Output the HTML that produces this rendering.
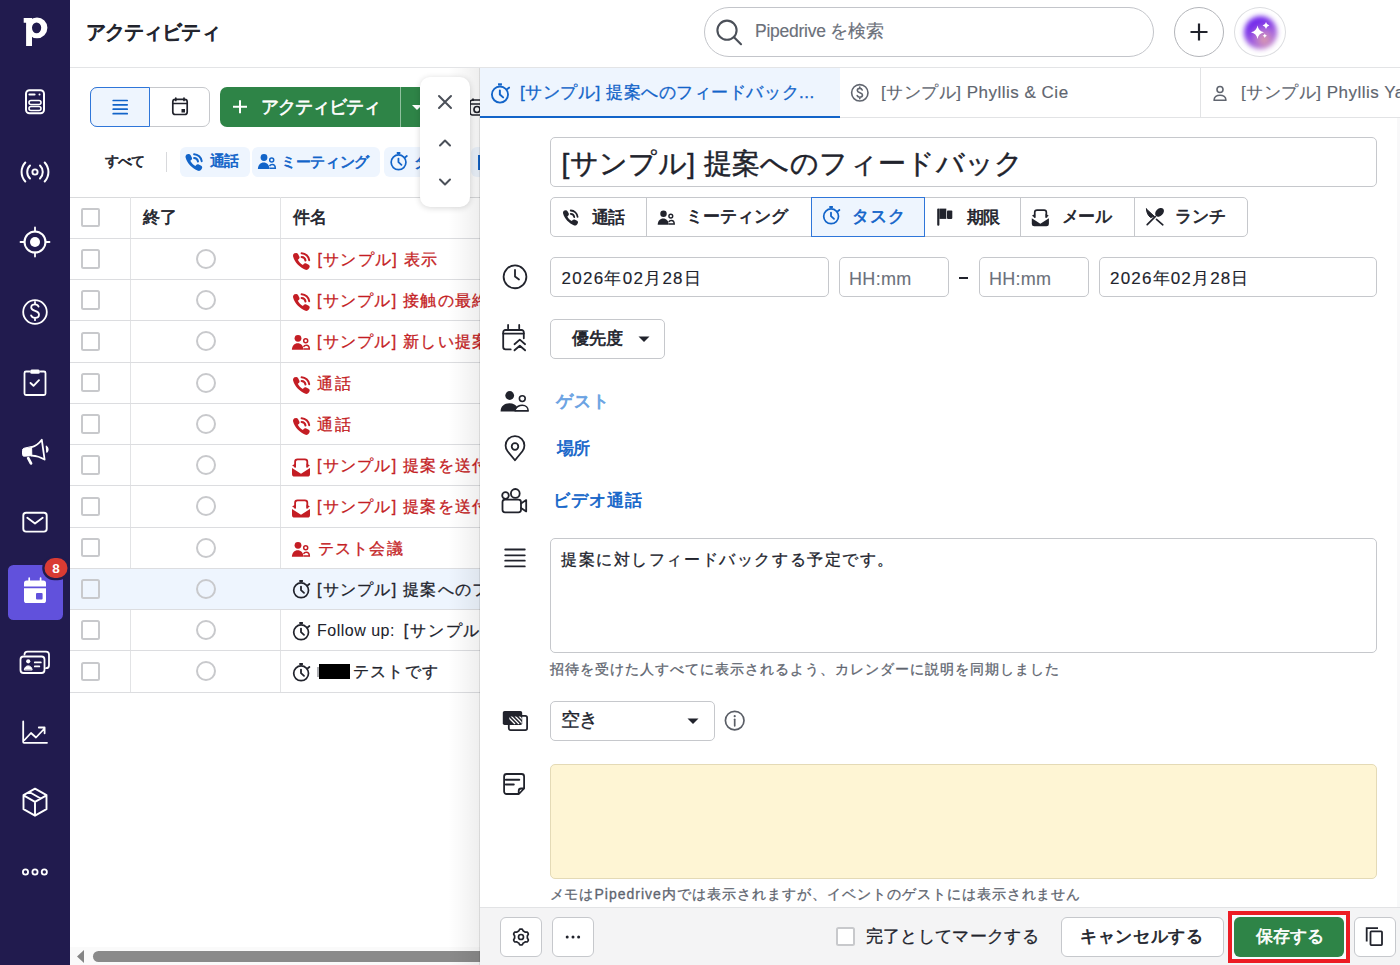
<!DOCTYPE html>
<html><head><meta charset="utf-8">
<style>
*{box-sizing:border-box;margin:0;padding:0}
html,body{width:1400px;height:965px;overflow:hidden;background:#fff;font-family:"Liberation Sans",sans-serif;color:#21232c}
.abs{position:absolute}
#side{position:absolute;left:0;top:0;width:70px;height:965px;background:#211b4e}
.si{position:absolute;left:23px;width:24px;height:24px}
#hdr{position:absolute;left:70px;top:0;width:1330px;height:68px;background:#fff;border-bottom:1px solid #e3e4e6}
#list{position:absolute;left:0;top:0;width:480px;height:965px;overflow:hidden}
#panel{position:absolute;left:0;top:0;width:1400px;height:965px}
.t{position:absolute;white-space:nowrap;line-height:1;-webkit-text-stroke:0.3px currentColor}
.t[style*="bold"]{font-weight:normal!important;-webkit-text-stroke:0.65px currentColor}
</style></head><body>

<div id="side">
<svg width="70" height="965" viewBox="0 0 70 965" style="position:absolute;left:0;top:0" fill="none" stroke="#fff" stroke-width="2" stroke-linecap="round" stroke-linejoin="round">
<!-- logo p -->
<path d="M23.7 17.9H32V45.9H26.1V22.8H23.7z" fill="#fff" stroke="none"/>
<path d="M37 17.5a10.4 10.35 0 1 1 0 20.7a10.4 10.35 0 1 1 0-20.7z M36.6 22.4a4.6 5.45 0 1 0 0 10.9a4.6 5.45 0 1 0 0-10.9z" fill="#fff" stroke="none" fill-rule="evenodd"/>
<!-- leads -->
<rect x="26" y="90.3" width="18" height="23" rx="3.5"/>
<rect x="29" y="100.5" width="12" height="4" rx="2" stroke-width="1.6"/>
<rect x="29" y="106.5" width="12" height="4" rx="2" stroke-width="1.6"/>
<path d="M29.5 94.5h5" stroke-width="2.2"/><circle cx="39.5" cy="94.5" r="1" fill="#fff" stroke="none"/>
<!-- broadcast -->
<circle cx="35" cy="172" r="2.6" stroke-width="1.9"/>
<path d="M30 165.5a9 9 0 0 0 0 13M40 165.5a9 9 0 0 1 0 13"/>
<path d="M25.3 162.5a14 14 0 0 0 0 19M44.7 162.5a14 14 0 0 1 0 19"/>
<!-- target -->
<circle cx="35" cy="242" r="10.5" stroke-width="2"/>
<circle cx="35" cy="242" r="5" fill="#fff" stroke="none"/>
<path d="M35 227.5v4M35 252.5v4M20.5 242h4M45.5 242h4" stroke-width="1.8"/>
<!-- dollar -->
<circle cx="35" cy="312" r="11.8" stroke-width="1.8"/>
<path d="M38.6 306.6c-.6-1.5-2-2.3-3.6-2.3-2.2 0-3.8 1.3-3.8 3.2 0 4.2 7.8 2.6 7.8 6.9 0 2-1.7 3.4-4 3.4-1.8 0-3.3-.9-3.9-2.4M35 302v2.3M35 317.8v2.4" stroke-width="1.8"/>
<!-- clipboard -->
<path d="M29.5 371.5h-3.5a1.5 1.5 0 0 0-1.5 1.5v20.5a1.5 1.5 0 0 0 1.5 1.5h18a1.5 1.5 0 0 0 1.5-1.5V373a1.5 1.5 0 0 0-1.5-1.5h-3.5" stroke-width="1.8"/>
<rect x="30.2" y="369.5" width="9.6" height="4.2" rx="1.5" fill="#fff" stroke="none"/>
<path d="M30.5 383l3 2.8 5.5-5.6" stroke-width="1.9"/>
<!-- megaphone -->
<path d="M23.8 448.3C23 448.5 22.5 449.3 22.5 450.3V454.5C22.5 455.5 23.2 456.3 24.2 456.2L31.8 455.7L31.6 446.9z" fill="#fff" stroke="#fff" stroke-width="1"/>
<path d="M31.6 447.2C35.5 446.2 39 443.6 41.8 439.8L44.6 459.6C40.8 457.3 36.5 455.9 31.8 455.7" stroke-width="1.8"/>
<path d="M28.2 458.2L31 463.4" stroke-width="2.8"/>
<path d="M46.3 446.2C48.3 447.5 48.7 450.5 46.8 452.2z" fill="#fff" stroke="#fff" stroke-width="1.2"/>
<!-- mail -->
<rect x="23.3" y="512.8" width="23.4" height="18.8" rx="2.8" stroke-width="1.9"/>
<path d="M27.3 517.8l7.7 5.8 7.7-5.8" stroke-width="1.9"/>
<!-- active -->
<rect x="8" y="565" width="55" height="55" rx="5.5" fill="#6151dc" stroke="none"/>
<path d="M24 583.2a2.6 2.6 0 0 1 2.6-2.6h16.8a2.6 2.6 0 0 1 2.6 2.6v3.2H24z M24 588.2h22v12.3a2.6 2.6 0 0 1-2.6 2.6H26.6a2.6 2.6 0 0 1-2.6-2.6z" fill="#fff" stroke="none"/>
<path d="M29.2 578.2v3M40.6 578.2v3" stroke-width="1.7"/>
<rect x="36" y="593" width="6.6" height="6.5" rx="1" fill="#6151dc" stroke="none"/>
<rect x="42.2" y="555.8" width="27.6" height="24.4" rx="12.2" fill="#211b4e" stroke="none"/>
<rect x="44.5" y="558" width="23" height="20" rx="10" fill="#d93b33" stroke="none"/>
<text x="56" y="573" text-anchor="middle" font-family="Liberation Sans" font-weight="bold" font-size="13.5" fill="#fff" stroke="none">8</text>
<!-- contacts -->
<path d="M24.5 654.6a3 3 0 0 1 3-3h18.5a3 3 0 0 1 3 3v10.6a3 3 0 0 1-3 3" stroke-width="1.8"/>
<rect x="20.5" y="656.5" width="24" height="16.5" rx="3" stroke-width="1.8"/>
<circle cx="28.2" cy="661.3" r="2.1" fill="#fff" stroke="none"/>
<path d="M24.3 669.6c.4-2.5 2-3.7 3.9-3.7s3.5 1.2 3.9 3.7z" fill="#fff" stroke="#fff" stroke-width="1"/>
<path d="M34.8 662.4h6M34.8 666.4h4.5" stroke-width="1.8"/>
<!-- chart -->
<path d="M23.2 721.5v20.5a.8.8 0 0 0 .8.8h23" stroke-width="1.8"/>
<path d="M24.5 740l6.5-7 5 4.5 8.5-9M38.8 727.5h5.8v5.8" stroke-width="1.8"/>
<!-- box -->
<path d="M35 788.7l11.5 6.5v14l-11.5 6.5-11.5-6.5v-14z M23.6 795.3L35 801.8l11.4-6.5 M35 801.8v13.8 M29.3 792l11.4 6.5" stroke-width="1.9"/>
<!-- dots -->
<circle cx="25.5" cy="872" r="2.6" stroke-width="1.8"/>
<circle cx="35" cy="872" r="2.6" stroke-width="1.8"/>
<circle cx="44.3" cy="872" r="2.6" stroke-width="1.8"/>
</svg>
</div>

<div id="hdr">
  <div class="t" id="hdrt" style="-webkit-text-stroke:1px currentColor;left:16.00px;top:21.50px;font-size:20px;font-weight:bold;letter-spacing:-0.91px">アクティビティ</div>
  <div class="abs" style="left:634px;top:7px;width:450px;height:50px;border:1px solid #c3c5ca;border-radius:25px"></div>
  <svg class="abs" style="left:640px;top:10px" width="40" height="40" viewBox="0 0 40 40" fill="none" stroke="#4b5059" stroke-width="2.1" stroke-linecap="round"><circle cx="17" cy="20.2" r="9.6"/><path d="M24 27.2l7 7"/></svg>
  <div class="t" id="srch" style="-webkit-text-stroke:0.15px currentColor;left:685.00px;top:23.30px;font-size:17.5px;color:#6b707a;letter-spacing:-0.25px">Pipedrive を検索</div>
  <div class="abs" style="left:1104px;top:7px;width:50px;height:50px;border:1px solid #b3b5ba;border-radius:50%"></div>
  <svg class="abs" style="left:1104px;top:7px" width="50" height="50" viewBox="0 0 50 50" fill="none" stroke="#21232c" stroke-width="2.2"><path d="M25 16.5v17M16.5 25h17"/></svg>
  <div class="abs" style="left:1164px;top:7px;width:52px;height:50px;border:1px solid #dcdde0;border-radius:50%;overflow:hidden">
    <div class="abs" style="left:9px;top:8px;width:33px;height:33px;border-radius:50%;filter:blur(2.5px);background:radial-gradient(circle at 62% 72%,#e0a0a8 0%,#b070d8 30%,rgba(160,80,235,0) 60%),radial-gradient(circle at 42% 38%,#6a20ee 0%,#7a30ea 45%,#9048e0 70%,#b78ad8 100%)"></div>
    <svg class="abs" style="left:0;top:0" width="52" height="50" viewBox="0 0 52 50" fill="#fff"><path d="M22.5 17.5q1 5.5 6.5 6.8q-5.5 1.2-6.5 6.8q-1-5.6-6.5-6.8q5.5-1.3 6.5-6.8z"/><path d="M31 14q.6 3 3.4 3.5q-2.8.6-3.4 3.5q-.6-2.9-3.4-3.5q2.8-.5 3.4-3.5z"/><path d="M29.8 25.5q.4 1.9 2.2 2.3q-1.8.4-2.2 2.3q-.4-1.9-2.2-2.3q1.8-.4 2.2-2.3z"/></svg>
  </div>
</div>

<div id="list">
<div class="abs" style="left:90px;top:87px;width:120px;height:40px;border:1px solid #c6c8cc;border-radius:7px"></div>
<div class="abs" style="left:90px;top:87px;width:60px;height:40px;border:1.5px solid #2f76d9;border-radius:7px 0 0 7px;background:#eef5fe"></div>
<svg class="abs" style="left:90px;top:87px" width="120" height="40" viewBox="0 0 120 40" fill="none" stroke-linecap="round">
<path d="M23.2 13.5h14M23.2 17.8h14M23.2 22.2h14M23.2 26.7h14" stroke="#1264c9" stroke-width="1.7"/>
<rect x="82.8" y="12.3" width="14.4" height="15.2" rx="2.5" stroke="#21232c" stroke-width="1.7"/>
<path d="M82.8 16.5h14.4M85.8 11v2.5M94 11v2.5" stroke="#21232c" stroke-width="1.7"/>
<rect x="91.5" y="22" width="3.5" height="3.5" fill="#21232c"/>
</svg>
<div class="abs" style="left:220px;top:87px;width:240px;height:40px;background:#2e8447;border-radius:7px"></div>
<div class="abs" style="left:400px;top:87px;width:1px;height:40px;background:#8fc09d"></div>
<svg class="abs" style="left:220px;top:87px" width="40" height="40" viewBox="0 0 40 40"><path d="M20 13.2v13M13 19.8h14" stroke="#fff" stroke-width="2"/></svg>
<div class="t" id="gbtn" style="left:261.00px;top:98px;font-size:18px;font-weight:bold;color:#fff;letter-spacing:-1.07px">アクティビティ</div>
<svg class="abs" style="left:410px;top:100px" width="14" height="14" viewBox="0 0 14 14"><path d="M2 5h10l-5 5z" fill="#fff"/></svg>
<svg class="abs" style="left:462px;top:92px" width="30" height="30" viewBox="0 0 30 30" fill="none" stroke="#21232c" stroke-width="1.7"><rect x="8" y="8" width="14" height="15" rx="2.5"/><path d="M8 12h14M11 6.5v2.5M19 6.5v2.5"/><circle cx="15" cy="17.5" r="3"/></svg>

<div class="t" id="all" style="left:105.00px;top:153.50px;font-size:14px;font-weight:bold;color:#21232c;letter-spacing:-0.87px">すべて</div>
<div class="abs" style="left:166px;top:152px;width:1px;height:20px;background:#d8d9dc"></div>
<div class="abs" style="left:180px;top:147px;width:70px;height:30px;background:#eef5fe;border-radius:6px"></div>
<svg class="abs" style="left:180px;top:147px" width="30" height="30" viewBox="0 0 30 30"><g transform="translate(0.5,0)"><path d="M7.2 7.3c1-.6 2.2-.3 2.8.7l1.3 2.4c.5.9.3 2-.5 2.6l-1 .8c1.1 2.2 2.9 4 5.1 5.1l.8-1c.6-.8 1.7-1 2.6-.5l2.4 1.3c1 .6 1.3 1.8.7 2.8l-.6 1c-.7 1.1-2 1.7-3.3 1.3C11.6 21.3 6.7 16.4 5.1 10.5c-.3-1.3.2-2.6 1.3-3.3z" fill="#1264c9"/><path d="M13.6 7.2a8 8 0 0 1 7.6 7M13.6 11a4.2 4.2 0 0 1 3.9 3.5" fill="none" stroke="#1264c9" stroke-width="2" stroke-linecap="round"/></g></svg>
<div class="t" id="c1" style="left:210.00px;top:153.00px;font-size:15px;font-weight:bold;color:#1264c9;letter-spacing:-1.00px">通話</div>
<div class="abs" style="left:252px;top:147px;width:128px;height:30px;background:#eef5fe;border-radius:6px"></div>
<svg class="abs" style="left:252px;top:147px" width="30" height="30" viewBox="0 0 30 30"><g transform="translate(2,0.2)"><circle cx="10" cy="10.3" r="3.4" fill="#1264c9"/><path d="M3.9 21.8c0-4 2.6-6.6 5.8-6.6s5.8 2.6 5.8 6.6z" fill="#1264c9"/><circle cx="17.7" cy="12.7" r="2" fill="none" stroke="#1264c9" stroke-width="1.5"/><path d="M15.5 21.1h5.8c0-2.4-1.3-3.8-3-3.8-1.2 0-2.2.5-2.8 1.5" fill="none" stroke="#1264c9" stroke-width="1.5"/></g></svg>
<div class="t" id="c2" style="left:281.00px;top:153.50px;font-size:15px;font-weight:bold;color:#1264c9;letter-spacing:-0.31px">ミーティング</div>
<div class="abs" style="left:384px;top:147px;width:84px;height:30px;background:#eef5fe;border-radius:6px"></div>
<svg class="abs" style="left:384px;top:147px" width="30" height="30" viewBox="0 0 30 30"><g transform="translate(1.45,-1)"><circle cx="13.1" cy="16.3" r="7.4" fill="none" stroke="#1264c9" stroke-width="1.7"/><rect x="11.3" y="6" width="3.6" height="2" fill="#1264c9"/><path d="M19.8 11.2l1.6-1.2" stroke="#1264c9" stroke-width="1.8" stroke-linecap="round"/><path d="M13 12.6v3.6l3 2.7" fill="none" stroke="#1264c9" stroke-width="1.8" stroke-linecap="round" stroke-linejoin="round"/></g></svg>
<div class="t" id="c3" style="left:414px;top:153.50px;font-size:15px;font-weight:bold;color:#1264c9">タスク</div>
<div class="abs" style="left:471px;top:147px;width:20px;height:30px;background:#eef5fe;border-radius:6px"></div>
<div class="abs" style="left:478px;top:155px;width:2px;height:15px;background:#1264c9"></div>

<div class="abs" style="left:70px;top:197px;width:410px;height:1px;background:#d9dadc"></div>
<div class="abs" style="left:130px;top:197px;width:1px;height:495px;background:#e2e3e5"></div>
<div class="abs" style="left:280px;top:197px;width:1px;height:495px;background:#e2e3e5"></div>
<div class="abs" style="left:80.5px;top:208px;width:19px;height:19px;border:2px solid #c8c9cc;border-radius:2px;background:#fff"></div>
<div class="t" id="th1" style="left:143.00px;top:209px;font-size:17px;font-weight:bold;letter-spacing:0.00px">終了</div>
<div class="t" id="th2" style="left:293.00px;top:209px;font-size:17px;font-weight:bold;letter-spacing:-0.50px">件名</div>
<div class="abs" style="left:70px;top:568.25px;width:410px;height:41.25px;background:#eef5fe"></div>
<div class="abs" style="left:70px;top:238.0px;width:410px;height:1px;background:#dcdde0"></div>
<div class="abs" style="left:70px;top:279.0px;width:410px;height:1px;background:#dcdde0"></div>
<div class="abs" style="left:70px;top:320.25px;width:410px;height:1px;background:#dcdde0"></div>
<div class="abs" style="left:70px;top:361.5px;width:410px;height:1px;background:#dcdde0"></div>
<div class="abs" style="left:70px;top:402.75px;width:410px;height:1px;background:#dcdde0"></div>
<div class="abs" style="left:70px;top:444.0px;width:410px;height:1px;background:#dcdde0"></div>
<div class="abs" style="left:70px;top:485.25px;width:410px;height:1px;background:#dcdde0"></div>
<div class="abs" style="left:70px;top:526.5px;width:410px;height:1px;background:#dcdde0"></div>
<div class="abs" style="left:70px;top:567.75px;width:410px;height:1px;background:#dcdde0"></div>
<div class="abs" style="left:70px;top:609.0px;width:410px;height:1px;background:#dcdde0"></div>
<div class="abs" style="left:70px;top:650.25px;width:410px;height:1px;background:#dcdde0"></div>
<div class="abs" style="left:70px;top:691.5px;width:410px;height:1px;background:#dcdde0"></div>
<div class="abs" style="left:80.5px;top:249.25px;width:19.5px;height:19.5px;border:2px solid #c8c9cc;border-radius:2.5px"></div>
<div class="abs" style="left:196px;top:249.0px;width:20px;height:20px;border:2px solid #c8c9cc;border-radius:50%"></div>
<svg class="abs" style="left:288px;top:246.0px" width="30" height="30" viewBox="0 0 30 30"><path d="M7.2 7.3c1-.6 2.2-.3 2.8.7l1.3 2.4c.5.9.3 2-.5 2.6l-1 .8c1.1 2.2 2.9 4 5.1 5.1l.8-1c.6-.8 1.7-1 2.6-.5l2.4 1.3c1 .6 1.3 1.8.7 2.8l-.6 1c-.7 1.1-2 1.7-3.3 1.3C11.6 21.3 6.7 16.4 5.1 10.5c-.3-1.3.2-2.6 1.3-3.3z" fill="#c41d24"/><path d="M13.6 7.2a8 8 0 0 1 7.6 7M13.6 11a4.2 4.2 0 0 1 3.9 3.5" fill="none" stroke="#c41d24" stroke-width="2" stroke-linecap="round"/></svg>
<div class="t" id="r0" style="left:317.50px;top:252.00px;font-size:16px;color:#c41d24;letter-spacing:1.26px">[サンプル] 表示</div>
<div class="abs" style="left:80.5px;top:290.375px;width:19.5px;height:19.5px;border:2px solid #c8c9cc;border-radius:2.5px"></div>
<div class="abs" style="left:196px;top:290.125px;width:20px;height:20px;border:2px solid #c8c9cc;border-radius:50%"></div>
<svg class="abs" style="left:288px;top:287.125px" width="30" height="30" viewBox="0 0 30 30"><path d="M7.2 7.3c1-.6 2.2-.3 2.8.7l1.3 2.4c.5.9.3 2-.5 2.6l-1 .8c1.1 2.2 2.9 4 5.1 5.1l.8-1c.6-.8 1.7-1 2.6-.5l2.4 1.3c1 .6 1.3 1.8.7 2.8l-.6 1c-.7 1.1-2 1.7-3.3 1.3C11.6 21.3 6.7 16.4 5.1 10.5c-.3-1.3.2-2.6 1.3-3.3z" fill="#c41d24"/><path d="M13.6 7.2a8 8 0 0 1 7.6 7M13.6 11a4.2 4.2 0 0 1 3.9 3.5" fill="none" stroke="#c41d24" stroke-width="2" stroke-linecap="round"/></svg>
<div class="t" id="r1" style="left:317.00px;top:293.12px;font-size:16px;color:#c41d24;letter-spacing:1.26px">[サンプル] 接触の最終確認</div>
<div class="abs" style="left:80.5px;top:331.625px;width:19.5px;height:19.5px;border:2px solid #c8c9cc;border-radius:2.5px"></div>
<div class="abs" style="left:196px;top:331.375px;width:20px;height:20px;border:2px solid #c8c9cc;border-radius:50%"></div>
<svg class="abs" style="left:288px;top:328.375px" width="30" height="30" viewBox="0 0 30 30"><circle cx="10" cy="10.3" r="3.4" fill="#c41d24"/><path d="M3.9 21.8c0-4 2.6-6.6 5.8-6.6s5.8 2.6 5.8 6.6z" fill="#c41d24"/><circle cx="17.7" cy="12.7" r="2" fill="none" stroke="#c41d24" stroke-width="1.5"/><path d="M15.5 21.1h5.8c0-2.4-1.3-3.8-3-3.8-1.2 0-2.2.5-2.8 1.5" fill="none" stroke="#c41d24" stroke-width="1.5"/></svg>
<div class="t" id="r2" style="left:317.00px;top:334.38px;font-size:16px;color:#c41d24;letter-spacing:1.26px">[サンプル] 新しい提案</div>
<div class="abs" style="left:80.5px;top:372.875px;width:19.5px;height:19.5px;border:2px solid #c8c9cc;border-radius:2.5px"></div>
<div class="abs" style="left:196px;top:372.625px;width:20px;height:20px;border:2px solid #c8c9cc;border-radius:50%"></div>
<svg class="abs" style="left:288px;top:369.625px" width="30" height="30" viewBox="0 0 30 30"><path d="M7.2 7.3c1-.6 2.2-.3 2.8.7l1.3 2.4c.5.9.3 2-.5 2.6l-1 .8c1.1 2.2 2.9 4 5.1 5.1l.8-1c.6-.8 1.7-1 2.6-.5l2.4 1.3c1 .6 1.3 1.8.7 2.8l-.6 1c-.7 1.1-2 1.7-3.3 1.3C11.6 21.3 6.7 16.4 5.1 10.5c-.3-1.3.2-2.6 1.3-3.3z" fill="#c41d24"/><path d="M13.6 7.2a8 8 0 0 1 7.6 7M13.6 11a4.2 4.2 0 0 1 3.9 3.5" fill="none" stroke="#c41d24" stroke-width="2" stroke-linecap="round"/></svg>
<div class="t" id="r3" style="left:317.00px;top:375.62px;font-size:16px;color:#c41d24;letter-spacing:2.00px">通話</div>
<div class="abs" style="left:80.5px;top:414.125px;width:19.5px;height:19.5px;border:2px solid #c8c9cc;border-radius:2.5px"></div>
<div class="abs" style="left:196px;top:413.875px;width:20px;height:20px;border:2px solid #c8c9cc;border-radius:50%"></div>
<svg class="abs" style="left:288px;top:410.875px" width="30" height="30" viewBox="0 0 30 30"><path d="M7.2 7.3c1-.6 2.2-.3 2.8.7l1.3 2.4c.5.9.3 2-.5 2.6l-1 .8c1.1 2.2 2.9 4 5.1 5.1l.8-1c.6-.8 1.7-1 2.6-.5l2.4 1.3c1 .6 1.3 1.8.7 2.8l-.6 1c-.7 1.1-2 1.7-3.3 1.3C11.6 21.3 6.7 16.4 5.1 10.5c-.3-1.3.2-2.6 1.3-3.3z" fill="#c41d24"/><path d="M13.6 7.2a8 8 0 0 1 7.6 7M13.6 11a4.2 4.2 0 0 1 3.9 3.5" fill="none" stroke="#c41d24" stroke-width="2" stroke-linecap="round"/></svg>
<div class="t" id="r4" style="left:317.00px;top:416.88px;font-size:16px;color:#c41d24;letter-spacing:2.00px">通話</div>
<div class="abs" style="left:80.5px;top:455.375px;width:19.5px;height:19.5px;border:2px solid #c8c9cc;border-radius:2.5px"></div>
<div class="abs" style="left:196px;top:455.125px;width:20px;height:20px;border:2px solid #c8c9cc;border-radius:50%"></div>
<svg class="abs" style="left:288px;top:452.125px" width="30" height="30" viewBox="0 0 30 30"><path d="M4 16l9 5.8 9-5.8v6a2.6 2.6 0 0 1-2.6 2.6H6.6A2.6 2.6 0 0 1 4 22z" fill="#c41d24"/><path d="M7.1 15.5V9.8a2.4 2.4 0 0 1 2.4-2.4h7.4a2.4 2.4 0 0 1 2.4 2.4v5.7" fill="none" stroke="#c41d24" stroke-width="1.8"/><path d="M4.1 13.5L7.5 11.4v4.2zM21.9 13.5L18.5 11.4v4.2z" fill="#c41d24"/></svg>
<div class="t" id="r5" style="left:317.00px;top:458.12px;font-size:16px;color:#c41d24;letter-spacing:1.26px">[サンプル] 提案を送付</div>
<div class="abs" style="left:80.5px;top:496.625px;width:19.5px;height:19.5px;border:2px solid #c8c9cc;border-radius:2.5px"></div>
<div class="abs" style="left:196px;top:496.375px;width:20px;height:20px;border:2px solid #c8c9cc;border-radius:50%"></div>
<svg class="abs" style="left:288px;top:493.375px" width="30" height="30" viewBox="0 0 30 30"><path d="M4 16l9 5.8 9-5.8v6a2.6 2.6 0 0 1-2.6 2.6H6.6A2.6 2.6 0 0 1 4 22z" fill="#c41d24"/><path d="M7.1 15.5V9.8a2.4 2.4 0 0 1 2.4-2.4h7.4a2.4 2.4 0 0 1 2.4 2.4v5.7" fill="none" stroke="#c41d24" stroke-width="1.8"/><path d="M4.1 13.5L7.5 11.4v4.2zM21.9 13.5L18.5 11.4v4.2z" fill="#c41d24"/></svg>
<div class="t" id="r6" style="left:317.00px;top:499.38px;font-size:16px;color:#c41d24;letter-spacing:1.26px">[サンプル] 提案を送付</div>
<div class="abs" style="left:80.5px;top:537.875px;width:19.5px;height:19.5px;border:2px solid #c8c9cc;border-radius:2.5px"></div>
<div class="abs" style="left:196px;top:537.625px;width:20px;height:20px;border:2px solid #c8c9cc;border-radius:50%"></div>
<svg class="abs" style="left:288px;top:534.625px" width="30" height="30" viewBox="0 0 30 30"><circle cx="10" cy="10.3" r="3.4" fill="#c41d24"/><path d="M3.9 21.8c0-4 2.6-6.6 5.8-6.6s5.8 2.6 5.8 6.6z" fill="#c41d24"/><circle cx="17.7" cy="12.7" r="2" fill="none" stroke="#c41d24" stroke-width="1.5"/><path d="M15.5 21.1h5.8c0-2.4-1.3-3.8-3-3.8-1.2 0-2.2.5-2.8 1.5" fill="none" stroke="#c41d24" stroke-width="1.5"/></svg>
<div class="t" id="r7" style="left:317.50px;top:540.62px;font-size:16px;color:#c41d24;letter-spacing:1.30px">テスト会議</div>
<div class="abs" style="left:80.5px;top:579.125px;width:19.5px;height:19.5px;border:2px solid #c8c9cc;border-radius:2.5px"></div>
<div class="abs" style="left:196px;top:578.875px;width:20px;height:20px;border:2px solid #c8c9cc;border-radius:50%"></div>
<svg class="abs" style="left:288px;top:574.4px" width="30" height="30" viewBox="0 0 30 30"><circle cx="13.1" cy="16.3" r="7.4" fill="none" stroke="#21232c" stroke-width="1.7"/><rect x="11.3" y="6" width="3.6" height="2" fill="#21232c"/><path d="M19.8 11.2l1.6-1.2" stroke="#21232c" stroke-width="1.8" stroke-linecap="round"/><path d="M13 12.6v3.6l3 2.7" fill="none" stroke="#21232c" stroke-width="1.8" stroke-linecap="round" stroke-linejoin="round"/></svg>
<div class="t" id="r8" style="left:317.00px;top:581.88px;font-size:16px;color:#21232c;letter-spacing:1.26px">[サンプル] 提案へのフィードバック</div>
<div class="abs" style="left:80.5px;top:620.375px;width:19.5px;height:19.5px;border:2px solid #c8c9cc;border-radius:2.5px"></div>
<div class="abs" style="left:196px;top:620.125px;width:20px;height:20px;border:2px solid #c8c9cc;border-radius:50%"></div>
<svg class="abs" style="left:288px;top:615.6px" width="30" height="30" viewBox="0 0 30 30"><circle cx="13.1" cy="16.3" r="7.4" fill="none" stroke="#21232c" stroke-width="1.7"/><rect x="11.3" y="6" width="3.6" height="2" fill="#21232c"/><path d="M19.8 11.2l1.6-1.2" stroke="#21232c" stroke-width="1.8" stroke-linecap="round"/><path d="M13 12.6v3.6l3 2.7" fill="none" stroke="#21232c" stroke-width="1.8" stroke-linecap="round" stroke-linejoin="round"/></svg>
<div class="t" id="r9" style="left:317.00px;top:623.12px;font-size:16px;color:#21232c;letter-spacing:1.8px"><span style="-webkit-text-stroke:0.05px currentColor;letter-spacing:0.5px">Follow up:<span style="letter-spacing:0">&nbsp; </span></span>[サンプル] 提案</div>
<div class="abs" style="left:80.5px;top:661.625px;width:19.5px;height:19.5px;border:2px solid #c8c9cc;border-radius:2.5px"></div>
<div class="abs" style="left:196px;top:661.375px;width:20px;height:20px;border:2px solid #c8c9cc;border-radius:50%"></div>
<svg class="abs" style="left:288px;top:656.9px" width="30" height="30" viewBox="0 0 30 30"><circle cx="13.1" cy="16.3" r="7.4" fill="none" stroke="#21232c" stroke-width="1.7"/><rect x="11.3" y="6" width="3.6" height="2" fill="#21232c"/><path d="M19.8 11.2l1.6-1.2" stroke="#21232c" stroke-width="1.8" stroke-linecap="round"/><path d="M13 12.6v3.6l3 2.7" fill="none" stroke="#21232c" stroke-width="1.8" stroke-linecap="round" stroke-linejoin="round"/></svg>
<div class="t" id="r10" style="left:353.00px;top:664.38px;font-size:16px;color:#21232c;letter-spacing:1.24px">テストです</div>
<div class="abs" style="left:316.5px;top:667px;width:2px;height:10px;background:#6b6e75;opacity:.55"></div>
<div class="abs" style="left:319px;top:664px;width:31px;height:15px;background:#000"></div>
<div class="abs" style="left:70px;top:946.5px;width:410px;height:19px;background:#fafafa"></div>
<svg class="abs" style="left:70px;top:946px" width="20" height="20" viewBox="0 0 20 20"><path d="M7 10.5l7-6.5v13z" fill="#858585"/></svg>
<div class="abs" style="left:93px;top:951px;width:400px;height:11px;background:#8a8a8a;border-radius:5.5px"></div>
<div class="abs" style="left:448px;top:68px;width:32px;height:897px;background:linear-gradient(90deg,rgba(0,0,0,0),rgba(0,0,0,.025) 40%,rgba(0,0,0,.065))"></div>
<div class="abs" style="left:479px;top:68px;width:1px;height:897px;background:rgba(0,0,0,.09)"></div>
<div class="abs" style="left:420px;top:77px;width:50px;height:130px;background:#fff;border-radius:10px;box-shadow:0 1px 6px rgba(0,0,0,.16)"></div>
<svg class="abs" style="left:420px;top:77px" width="50" height="130" viewBox="0 0 50 130" fill="none" stroke="#4b5059" stroke-width="2" stroke-linecap="round" stroke-linejoin="round">
<path d="M19 19l12 12M31 19l-12 12"/>
<path d="M20 68.5l5-5 5 5"/>
<path d="M20 102.5l5 5 5-5"/>
</svg>

</div>

<div id="panel">
<!-- tabs -->
<div class="abs" style="left:480px;top:68px;width:360px;height:50px;background:#eef5fe"></div>
<div class="abs" style="left:480px;top:117px;width:920px;height:1px;background:#e2e3e5"></div>
<div class="abs" style="left:480px;top:116px;width:360px;height:2px;background:#1264c9"></div>
<div class="abs" style="left:1200px;top:68px;width:1px;height:49px;background:#e2e3e5"></div>
<svg class="abs" style="left:485px;top:77px" width="30" height="30" viewBox="0 0 30 30"><g transform="translate(0.7,-0.24) scale(1.09)"><circle cx="13.1" cy="16.3" r="7.4" fill="none" stroke="#1264c9" stroke-width="1.7"/><rect x="11.3" y="6" width="3.6" height="2" fill="#1264c9"/><path d="M19.8 11.2l1.6-1.2" stroke="#1264c9" stroke-width="1.8" stroke-linecap="round"/><path d="M13 12.6v3.6l3 2.7" fill="none" stroke="#1264c9" stroke-width="1.8" stroke-linecap="round" stroke-linejoin="round"/></g></svg>
<div class="t" id="tab1" style="left:520.00px;top:84px;font-size:17px;color:#1264c9;letter-spacing:0.55px">[サンプル] 提案へのフィードバック...</div>
<svg class="abs" style="left:850px;top:83px" width="20" height="20" viewBox="0 0 20 20" fill="none" stroke="#60656f" stroke-width="1.6" stroke-linecap="round"><circle cx="9.8" cy="9.8" r="8.2"/><path d="M12.2 7c-.4-1-1.3-1.6-2.4-1.6-1.5 0-2.5.9-2.5 2.1 0 2.8 5.2 1.7 5.2 4.5 0 1.3-1.1 2.2-2.7 2.2-1.2 0-2.2-.6-2.6-1.6M9.8 4v1.4M9.8 14.2v1.5"/></svg>
<div class="t" id="tab2" style="-webkit-text-stroke:0.15px currentColor;left:881.00px;top:84px;font-size:17px;color:#60656f;letter-spacing:0.50px">[サンプル] Phyllis &amp; Cie</div>
<svg class="abs" style="left:1210px;top:83px" width="20" height="20" viewBox="0 0 20 20" fill="none" stroke="#60656f" stroke-width="1.6"><circle cx="10" cy="6.5" r="3"/><path d="M4.2 17.3v-.8c0-2.6 2.5-4.3 5.8-4.3s5.8 1.7 5.8 4.3v.8z"/></svg>
<div class="t" id="tab3" style="-webkit-text-stroke:0.15px currentColor;left:1241.00px;top:84px;font-size:17px;color:#60656f;letter-spacing:0.50px">[サンプル] Phyllis Yamamoto</div>

<div class="abs" style="left:1397px;top:118px;width:3px;height:789px;background:#f8f8f9"></div>
<!-- title -->
<div class="abs" style="left:550px;top:137px;width:827px;height:50px;border:1px solid #c6c8cc;border-radius:5px"></div>
<div class="t" id="title" style="-webkit-text-stroke:0.45px currentColor;left:561.50px;top:149.50px;font-size:28px;color:#21232c;letter-spacing:0.39px">[サンプル] 提案へのフィードバック</div>

<!-- types -->
<div class="abs" style="left:550px;top:197px;width:698px;height:40px;border:1px solid #c6c8cc;border-radius:5px"></div>
<div class="abs" style="left:646px;top:197px;width:1px;height:40px;background:#c6c8cc"></div>
<div class="abs" style="left:811px;top:197px;width:114px;height:40px;background:#eef5fe;border:1px solid #2f76d9"></div>
<div class="abs" style="left:1020px;top:197px;width:1px;height:40px;background:#c6c8cc"></div>
<div class="abs" style="left:1134px;top:197px;width:1px;height:40px;background:#c6c8cc"></div>
<svg class="abs" style="left:557px;top:203.5px" width="30" height="30" viewBox="0 0 30 30"><g transform="translate(1.5,0) scale(.9)"><path d="M7.2 7.3c1-.6 2.2-.3 2.8.7l1.3 2.4c.5.9.3 2-.5 2.6l-1 .8c1.1 2.2 2.9 4 5.1 5.1l.8-1c.6-.8 1.7-1 2.6-.5l2.4 1.3c1 .6 1.3 1.8.7 2.8l-.6 1c-.7 1.1-2 1.7-3.3 1.3C11.6 21.3 6.7 16.4 5.1 10.5c-.3-1.3.2-2.6 1.3-3.3z" fill="#21232c"/><path d="M13.6 7.2a8 8 0 0 1 7.6 7M13.6 11a4.2 4.2 0 0 1 3.9 3.5" fill="none" stroke="#21232c" stroke-width="2" stroke-linecap="round"/></g></svg>
<div class="t" id="b1" style="left:591.50px;top:208.50px;font-size:17px;font-weight:bold;letter-spacing:-0.25px">通話</div>
<svg class="abs" style="left:653px;top:203.5px" width="30" height="30" viewBox="0 0 30 30"><g transform="translate(1,0) scale(.95)"><circle cx="10" cy="10.3" r="3.4" fill="#21232c"/><path d="M3.9 21.8c0-4 2.6-6.6 5.8-6.6s5.8 2.6 5.8 6.6z" fill="#21232c"/><circle cx="17.7" cy="12.7" r="2" fill="none" stroke="#21232c" stroke-width="1.5"/><path d="M15.5 21.1h5.8c0-2.4-1.3-3.8-3-3.8-1.2 0-2.2.5-2.8 1.5" fill="none" stroke="#21232c" stroke-width="1.5"/></g></svg>
<div class="t" id="b2" style="left:685.50px;top:208.00px;font-size:17px;font-weight:bold;letter-spacing:0.00px">ミーティング</div>
<svg class="abs" style="left:818px;top:200px" width="30" height="30" viewBox="0 0 30 30"><circle cx="13.1" cy="16.3" r="7.4" fill="none" stroke="#1264c9" stroke-width="1.7"/><rect x="11.3" y="6" width="3.6" height="2" fill="#1264c9"/><path d="M19.8 11.2l1.6-1.2" stroke="#1264c9" stroke-width="1.8" stroke-linecap="round"/><path d="M13 12.6v3.6l3 2.7" fill="none" stroke="#1264c9" stroke-width="1.8" stroke-linecap="round" stroke-linejoin="round"/></svg>
<div class="t" id="b3" style="left:851.50px;top:207.50px;font-size:17px;font-weight:bold;color:#1264c9;letter-spacing:1.18px">タスク</div>
<svg class="abs" style="left:930px;top:202px" width="30" height="30" viewBox="0 0 30 30" fill="#21232c"><rect x="7.2" y="6.6" width="2.2" height="17.1" rx="1"/><path d="M9.4 6.6h6.9v10.3H9.4z"/><rect x="17" y="8.6" width="5.3" height="8.3" rx=".8"/></svg>
<div class="t" id="b4" style="left:967.00px;top:208.50px;font-size:17px;font-weight:bold;letter-spacing:-1.00px">期限</div>
<svg class="abs" style="left:1028px;top:202px" width="30" height="30" viewBox="0 0 30 30"><g transform="translate(0,1) scale(.95)"><path d="M4 16l9 5.8 9-5.8v6a2.6 2.6 0 0 1-2.6 2.6H6.6A2.6 2.6 0 0 1 4 22z" fill="#21232c"/><path d="M7.1 15.5V9.8a2.4 2.4 0 0 1 2.4-2.4h7.4a2.4 2.4 0 0 1 2.4 2.4v5.7" fill="none" stroke="#21232c" stroke-width="1.8"/><path d="M4.1 13.5L7.5 11.4v4.2zM21.9 13.5L18.5 11.4v4.2z" fill="#21232c"/></g></svg>
<div class="t" id="b5" style="left:1061.50px;top:208.00px;font-size:17px;font-weight:bold;letter-spacing:-0.49px">メール</div>
<svg class="abs" style="left:1140px;top:202px" width="30" height="30" viewBox="0 0 30 30" fill="#21232c" stroke="#21232c" stroke-width="1.7" stroke-linecap="round"><path d="M6.4 7L14.3 14.3L10.6 15.6C8.2 13.6 6.6 10.8 6.4 7z" stroke-width="1" stroke-linejoin="round"/><path d="M16.5 17.3L22.8 22.8M15.2 14.6L7.2 22.6" fill="none"/><ellipse cx="19.6" cy="10.4" rx="3.6" ry="5.1" transform="rotate(45 19.7 10.3)" stroke="none"/></svg>
<div class="t" id="b6" style="left:1175.00px;top:207.50px;font-size:17px;font-weight:bold;letter-spacing:0.03px">ランチ</div>

<!-- left icons -->
<svg class="abs" style="left:495px;top:255px" width="40" height="560" viewBox="0 0 40 560" fill="none" stroke="#21232c" stroke-width="1.8" stroke-linecap="round" stroke-linejoin="round">
<circle cx="20" cy="21.85" r="11.4"/><path d="M20 15v6.5l4 3"/>
<path d="M13.1 70v3.5M24.2 70v3.5"/>
<path d="M15.7 94.4h-5.2a2.3 2.3 0 0 1-2.3-2.3V77.3a2.3 2.3 0 0 1 2.3-2.3h16a2.3 2.3 0 0 1 2.3 2.3v6"/><path d="M8.2 78.6h20.6"/>
<path d="M19.5 89.2l5.3-4.6 5.3 4.6M19.5 95.3l5.3-4.6 5.3 4.6"/>
<circle cx="14.7" cy="140.5" r="4.4" fill="#21232c" stroke="none"/>
<path d="M5.6 156.6c0-5.3 3.7-8.3 8.8-8.3 3.9 0 6.8 1.7 8 4.3-1.2.8-2 2.1-2 4z" fill="#21232c" stroke="none"/>
<circle cx="27.3" cy="143.6" r="2.9" stroke-width="1.6"/>
<path d="M20.2 155.9h13c0-3.5-2.6-5.6-5.9-5.6-3.3 0-5.9 2.1-7.1 4" stroke-width="1.6"/>
<path d="M20 205.3l-7.4-9c-1.3-1.6-2-3.6-2-5.7a9.4 9.4 0 0 1 18.8 0c0 2.1-.7 4.1-2 5.7z"/><circle cx="20" cy="191.5" r="3.3"/>
<circle cx="10.5" cy="240.5" r="3.3"/><circle cx="20.3" cy="238.4" r="4.4"/>
<rect x="7.5" y="244.6" width="18.5" height="12.7" rx="2.5"/><path d="M26 248.5l5.2-3.4v11.3L26 253"/>
<path d="M10.2 294.5h19.6M10.2 300.3h19.6M10.2 305.7h19.6M10.2 311.4h19.6"/>
</svg>
<svg class="abs" style="left:495px;top:700px" width="40" height="100" viewBox="0 0 40 100" fill="none" stroke="#21232c" stroke-width="1.8" stroke-linecap="round" stroke-linejoin="round">
<rect x="13.8" y="15.9" width="18.3" height="14.2" rx="1.8"/>
<rect x="7.8" y="10.9" width="19.4" height="14.1" rx="1.8" fill="#21232c" stroke="none"/>
<clipPath id="ov"><rect x="14.3" y="16.5" width="12.4" height="8.2"/></clipPath><g clip-path="url(#ov)" stroke="#fff" stroke-width="1.3" stroke-linecap="butt"><path d="M12 16l8 8M16 16l8 8M20 16l8 8M24 16l8 8"/></g>
<path d="M29.1 88.5V76.5a2.5 2.5 0 0 0-2.5-2.5H11.6a2.5 2.5 0 0 0-2.5 2.5v15a2.5 2.5 0 0 0 2.5 2.5h12.3zM29.1 88.5h-2.9a2.5 2.5 0 0 0-2.5 2.5v3"/>
<path d="M10.8 79.8h13.5M10.8 84.5h8" stroke-width="1.9"/>
</svg>

<!-- date row -->
<div class="abs" style="left:550px;top:257px;width:279px;height:40px;border:1px solid #c6c8cc;border-radius:5px"></div>
<div class="t" id="d1" style="-webkit-text-stroke:0.15px currentColor;left:561.50px;top:270px;font-size:17px;letter-spacing:1.27px">2026年02月28日</div>
<div class="abs" style="left:839px;top:257px;width:110px;height:40px;border:1px solid #c6c8cc;border-radius:5px"></div>
<div class="t" id="h1" style="-webkit-text-stroke:0.1px currentColor;left:849.00px;top:269.50px;font-size:18px;color:#6b707a;letter-spacing:0.32px">HH:mm</div>
<div class="abs" style="left:959px;top:277px;width:9px;height:1.5px;background:#21232c"></div>
<div class="abs" style="left:979px;top:257px;width:110px;height:40px;border:1px solid #c6c8cc;border-radius:5px"></div>
<div class="t" id="h2" style="-webkit-text-stroke:0.1px currentColor;left:989.00px;top:269.50px;font-size:18px;color:#6b707a;letter-spacing:0.28px">HH:mm</div>
<div class="abs" style="left:1099px;top:257px;width:278px;height:40px;border:1px solid #c6c8cc;border-radius:5px"></div>
<div class="t" id="d2" style="-webkit-text-stroke:0.15px currentColor;left:1110.00px;top:270px;font-size:17px;letter-spacing:1.18px">2026年02月28日</div>

<!-- priority -->
<div class="abs" style="left:550px;top:319px;width:115px;height:40px;border:1px solid #c6c8cc;border-radius:5px"></div>
<div class="t" id="pri" style="left:572.00px;top:330px;font-size:17px;font-weight:bold;letter-spacing:0.03px">優先度</div>
<svg class="abs" style="left:636px;top:332px" width="16" height="12" viewBox="0 0 16 12"><path d="M2.5 4.5h11l-5.5 5.5z" fill="#21232c"/></svg>

<div class="t" id="guest" style="-webkit-text-stroke:0.9px currentColor;left:556.00px;top:393px;font-size:17px;font-weight:bold;color:#6ba3e3;letter-spacing:0.87px">ゲスト</div>
<div class="t" id="loc" style="left:557.00px;top:440px;font-size:17px;font-weight:bold;color:#1264c9;letter-spacing:-1.50px">場所</div>
<div class="t" id="vid" style="left:553.00px;top:492px;font-size:17px;font-weight:bold;color:#1264c9;letter-spacing:1.00px">ビデオ通話</div>

<!-- description -->
<div class="abs" style="left:550px;top:538px;width:827px;height:115px;border:1px solid #c6c8cc;border-radius:5px"></div>
<div class="t" id="desc" style="left:561.00px;top:552px;font-size:16px;letter-spacing:1.58px">提案に対しフィードバックする予定です。</div>
<div class="t" id="help1" style="left:550.00px;top:662px;font-size:14px;color:#60656f;letter-spacing:1.00px">招待を受けた人すべてに表示されるよう、カレンダーに説明を同期しました</div>

<!-- busy -->
<div class="abs" style="left:550px;top:701px;width:165px;height:40px;border:1px solid #c6c8cc;border-radius:5px"></div>
<div class="t" id="busy" style="left:561.00px;top:711.00px;font-size:18.5px;letter-spacing:-1.00px">空き</div>
<svg class="abs" style="left:685px;top:715px" width="16" height="12" viewBox="0 0 16 12"><path d="M2.5 3.5h11l-5.5 5.5z" fill="#21232c"/></svg>
<svg class="abs" style="left:723px;top:709px" width="24" height="24" viewBox="0 0 24 24" fill="none" stroke="#5a5e66" stroke-width="1.7"><circle cx="11.7" cy="11.6" r="9.3"/><path d="M11.7 10.3v6.5" stroke-linecap="round"/><circle cx="11.7" cy="7.2" r="1.1" fill="#5a5e66" stroke="none"/></svg>

<!-- notes -->
<div class="abs" style="left:550px;top:764px;width:827px;height:115px;border:1px solid #e4dab6;border-radius:5px;background:#fef5d4"></div>
<div class="t" id="help2" style="left:549.50px;top:887px;font-size:14px;color:#60656f;letter-spacing:0.99px">メモはPipedrive内では表示されますが、イベントのゲストには表示されません</div>

<!-- footer -->
<div class="abs" style="left:480px;top:907px;width:920px;height:58px;background:#f4f4f5;border-top:1px solid #e2e3e5"></div>
<div class="abs" style="left:500px;top:917px;width:41.5px;height:39.5px;background:#fff;border:1px solid #c6c8cc;border-radius:6px"></div>
<svg class="abs" style="left:509px;top:925px" width="24" height="24" viewBox="0 0 24 24" fill="none" stroke="#21232c" stroke-width="1.7" stroke-linejoin="round"><path d="M18.40 12.00 L18.38 12.56 L18.30 13.11 L18.76 13.81 L19.33 14.67 L19.25 15.38 L18.93 16.00 L18.55 16.59 L17.98 17.01 L16.95 16.95 L16.11 16.90 L15.67 17.24 L15.20 17.54 L14.70 17.80 L14.19 18.01 L13.81 18.76 L13.35 19.68 L12.70 19.97 L12.00 20.00 L11.30 19.97 L10.65 19.68 L10.19 18.76 L9.81 18.01 L9.30 17.80 L8.80 17.54 L8.33 17.24 L7.89 16.90 L7.05 16.95 L6.02 17.01 L5.45 16.59 L5.07 16.00 L4.75 15.38 L4.67 14.67 L5.24 13.81 L5.70 13.11 L5.62 12.56 L5.60 12.00 L5.62 11.44 L5.70 10.89 L5.24 10.19 L4.67 9.33 L4.75 8.62 L5.07 8.00 L5.45 7.41 L6.02 6.99 L7.05 7.05 L7.89 7.10 L8.33 6.76 L8.80 6.46 L9.30 6.20 L9.81 5.99 L10.19 5.24 L10.65 4.32 L11.30 4.03 L12.00 4.00 L12.70 4.03 L13.35 4.32 L13.81 5.24 L14.19 5.99 L14.70 6.20 L15.20 6.46 L15.67 6.76 L16.11 7.10 L16.95 7.05 L17.98 6.99 L18.55 7.41 L18.93 8.00 L19.25 8.62 L19.33 9.33 L18.76 10.19 L18.30 10.89 L18.38 11.44 L18.40 12.00z"/><circle cx="12" cy="12" r="2.5"/></svg>
<div class="abs" style="left:552px;top:917px;width:41.5px;height:39.5px;background:#fff;border:1px solid #c6c8cc;border-radius:6px"></div>
<svg class="abs" style="left:552px;top:917px" width="42" height="40" viewBox="0 0 42 40" fill="#21232c"><circle cx="15.2" cy="20" r="1.5"/><circle cx="21" cy="20" r="1.5"/><circle cx="26.6" cy="20" r="1.5"/></svg>
<div class="abs" style="left:835.5px;top:926.5px;width:19px;height:19px;border:2px solid #c8c9cc;border-radius:2.5px;background:#fff"></div>
<div class="t" id="done" style="left:865.50px;top:928px;font-size:17px;letter-spacing:0.35px">完了としてマークする</div>
<div class="abs" style="left:1060.5px;top:917px;width:163px;height:40px;background:#fff;border:1px solid #c6c8cc;border-radius:6px"></div>
<div class="t" id="cancel" style="left:1080.00px;top:928.00px;font-size:17px;font-weight:bold;letter-spacing:0.64px">キャンセルする</div>
<div class="abs" style="left:1228px;top:911px;width:122px;height:52px;border:4px solid #ec1c24;background:#f7fbfd"></div>
<div class="abs" style="left:1234px;top:917px;width:110px;height:40px;background:#2e8447;border-radius:6px"></div>
<div class="t" id="save" style="left:1255.50px;top:927.50px;font-size:17px;font-weight:bold;color:#fff;letter-spacing:0.05px">保存する</div>
<div class="abs" style="left:1354px;top:917px;width:41.5px;height:39.5px;background:#fff;border:1px solid #c6c8cc;border-radius:6px"></div>
<svg class="abs" style="left:1354px;top:917px" width="42" height="40" viewBox="0 0 42 40" fill="none" stroke="#21232c" stroke-width="1.8"><path d="M12.7 24.5V11.2h11.3"/><rect x="16.5" y="14.4" width="11.5" height="13.7" rx=".8"/></svg>
</div>
</body></html>
